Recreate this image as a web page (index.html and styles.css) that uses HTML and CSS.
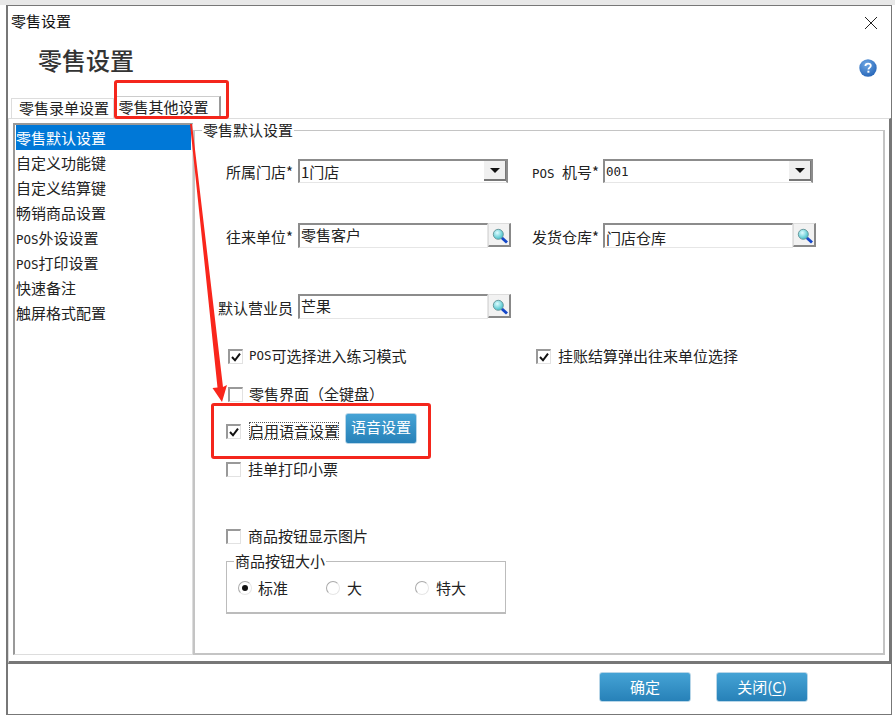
FILE: index.html
```html
<!DOCTYPE html>
<html lang="zh-CN">
<head>
<meta charset="utf-8">
<title>零售设置</title>
<link rel="stylesheet" href="styles.css">
</head>
<body>
<div class="dialog">
  <div class="titlebar">
    <span>零售设置</span>
    <svg class="close" width="14" height="14" viewBox="0 0 14 14"><path d="M1 1L13 13M13 1L1 13" stroke="#222" stroke-width="1" fill="none"/></svg>
  </div>
  <div class="heading">
    <h1>零售设置</h1>
    <svg class="help" width="18" height="18" viewBox="0 0 18 18">
      <defs><radialGradient id="hg" cx="0.4" cy="0.3" r="0.8"><stop offset="0" stop-color="#6fa8e4"/><stop offset="1" stop-color="#1f5fb4"/></radialGradient></defs>
      <circle cx="9" cy="9" r="8.7" fill="url(#hg)"/>
      <path d="M6.400 7C6.500 5.400 7.600 4.600 9.100 4.600C10.700 4.600 11.800 5.500 11.800 6.800C11.800 8.600 9.400 8.600 9.400 10.600" fill="none" stroke="#fff" stroke-width="1.800"/>
      <rect x="8.400" y="11.700" width="2" height="2" fill="#fff"/>
    </svg>
  </div>
  <div class="tabs">
    <div class="tab">零售录单设置</div>
    <div class="tab active">零售其他设置</div>
  </div>
  <div class="panel">
    <ul class="list">
      <li class="selected">零售默认设置</li>
      <li>自定义功能键</li>
      <li>自定义结算键</li>
      <li>畅销商品设置</li>
      <li><span class="lat">POS</span>外设设置</li>
      <li><span class="lat">POS</span>打印设置</li>
      <li>快速备注</li>
      <li>触屏格式配置</li>
    </ul>
    <fieldset class="group">
      <legend>零售默认设置</legend>
      <div class="fields">
        <div class="field"><label class="flabel">所属门店*</label><div class="combo"><span>1门店</span><span class="drop"><i></i></span></div></div>
        <div class="field right"><label class="flabel"><span class="lat">POS </span>机号*</label><div class="combo"><span class="lat">001</span><span class="drop"><i></i></span></div></div>
      </div>
      <div class="fields second">
        <div class="field tall"><label class="flabel">往来单位*</label><div class="lookup"><span>零售客户</span></div>
          <button class="find"><svg width="18" height="18" viewBox="0 0 18 18"><use href="#lens"/></svg></button></div>
        <div class="field tall right"><label class="flabel">发货仓库*</label><div class="lookup lower"><span>门店仓库</span></div>
          <button class="find"><svg width="18" height="18" viewBox="0 0 18 18"><use href="#lens"/></svg></button></div>
      </div>
      <div class="fields third">
        <div class="field tall"><label class="flabel">默认营业员</label><div class="lookup"><span>芒果</span></div>
          <button class="find"><svg width="18" height="18" viewBox="0 0 18 18"><use href="#lens"/></svg></button></div>
      </div>
      <div class="checks first-check">
        <div class="check on-a"><span class="box"><svg width="12" height="12" viewBox="0 0 12 12"><path d="M2 6L5 9.300L10 2.600" fill="none" stroke="#111" stroke-width="2"/></svg></span><span class="lat">POS</span>可选择进入练习模式</div>
        <div class="check on-b"><span class="box"><svg width="12" height="12" viewBox="0 0 12 12"><path d="M2 6L5 9.300L10 2.600" fill="none" stroke="#111" stroke-width="2"/></svg></span>挂账结算弹出往来单位选择</div>
      </div>
      <div class="check line-keyboard"><span class="box"></span>零售界面（全键盘）</div>
      <div class="check line-voice"><span class="box"><svg width="12" height="12" viewBox="0 0 12 12"><path d="M2 6L5 9.300L10 2.600" fill="none" stroke="#111" stroke-width="2"/></svg></span><span class="focus">启用语音设置</span><button class="blue voice">语音设置</button></div>
      <div class="check line-hang"><span class="box"></span>挂单打印小票</div>
      <div class="check line-image"><span class="box"></span>商品按钮显示图片</div>
      <fieldset class="sizes">
        <legend>商品按钮大小</legend>
        <div class="radios">
          <span class="radio r1"><i class="dot on"></i>标准</span>
          <span class="radio r2"><i class="dot"></i>大</span>
          <span class="radio r3"><i class="dot"></i>特大</span>
        </div>
      </fieldset>
    </fieldset>
  </div>
  <div class="footer">
    <button class="blue action">确定</button>
    <button class="blue action">关闭(<u>C</u>)</button>
  </div>
</div>

<svg class="defs" width="0" height="0">
  <defs>
    <radialGradient id="lg" cx="0.4" cy="0.35" r="0.7"><stop offset="0" stop-color="#dffcff"/><stop offset="1" stop-color="#37bcc6"/></radialGradient>
    <g id="lens">
      <path d="M10.500 10.500L16 15.500" stroke="#1447c8" stroke-width="3" fill="none"/>
      <circle cx="7.300" cy="7.300" r="5" fill="url(#lg)" stroke="#6c9a9e" stroke-width="1"/>
    </g>
  </defs>
</svg>

<div class="mark mark-tab"></div>
<div class="mark mark-voice"></div>
<svg class="arrow" width="895" height="717" viewBox="0 0 895 717">
  <path d="M190 124L192 124L223 387L227 385L222 402L212.500 388L217.500 387.500Z" fill="#f9261c"/>
</svg>
</body>
</html>
```
FILE: styles.css
```css
* { box-sizing: border-box; }
html, body { margin: 0; padding: 0; }
body {
  width: 895px;
  height: 717px;
  overflow: hidden;
  background: #fff;
  border-top: 5px solid #e8e8e8;
  padding: 0 3px 2px 6px;
  position: relative;
  font-family: "Noto Sans CJK SC", "Liberation Sans", sans-serif;
  font-size: 15px;
  line-height: 20px;
  color: #222;
}
.lat { font-family: "DejaVu Sans Mono", monospace; font-size: 12.5px; }
.dialog {
  height: 710px;
  border: 1px solid #777;
  border-left-width: 2px;
  background: #fff;
  display: flex;
  flex-direction: column;
}
.titlebar {
  height: 34px;
  flex: none;
  display: flex;
  align-items: center;
  justify-content: space-between;
  padding: 0 13px 4px 3px;
  color: #111;
}
.close { display: block; margin-top: 4px; }
.heading {
  height: 40px;
  flex: none;
  display: flex;
  align-items: center;
  justify-content: space-between;
  padding: 0 14px 0 30px;
}
.heading h1 {
  margin: 0;
  font-size: 24px;
  line-height: 30px;
  font-weight: 500;
  color: #333;
}
.help { margin-top: 16px; }
.tabs {
  height: 38px;
  flex: none;
  display: flex;
  align-items: flex-end;
  padding-left: 3px;
}
.tab {
  height: 20px;
  width: 103px;
  border: 1px solid #ddd;
  border-bottom: 0;
  padding-left: 3px;
  text-align: center;
  line-height: 17px;
  white-space: nowrap;
  color: #222;
}
.tab.active {
  height: 22px;
  width: 106px;
  margin-left: 1px;
  padding: 0 8px 0 0;
  border-color: #ccc;
  border-right: 2px solid #999;
  line-height: 19px;
}
.panel {
  height: 546px;
  flex: none;
  border: 1px solid #ddd;
  border-right: 2px solid #777;
  border-bottom: 3px solid #777;
  padding: 4px 4px 6px 4px;
  display: flex;
}
.list {
  list-style: none;
  margin: 0;
  padding: 0 1px;
  width: 180px;
  flex: none;
  border: 2px solid #999;
  border-right: 1px solid #ddd;
  border-bottom: 1px solid #ddd;
}
.list li {
  height: 25px;
  line-height: 25px;
  padding-left: 0;
  white-space: nowrap;
}
.list li.selected { background: #0078d7; color: #fff; }
.group {
  flex: 1;
  min-width: 0;
  margin: 0;
  padding: 0;
  border: 2px solid #c4c4c4;
  border-top-width: 1px;
  position: relative;
}
.group > legend {
  margin-left: 7px;
  padding: 0 1px;
  line-height: 14px;
  height: 14px;
}
.fields { display: flex; margin-top: 22px; }
.fields.second { margin-top: 40px; }
.fields.third { margin-top: 46px; }
.field { display: flex; align-items: stretch; height: 24px; width: 337px; }
.field.tall { height: 25px; }
.field.right { width: auto; }
.flabel {
  width: 103px;
  flex: none;
  text-align: right;
  padding-right: 5px;
  line-height: 26px;
  white-space: nowrap;
}
.field.tall .flabel { line-height: 28px; }
.field.right .flabel { width: 71px; padding-right: 0; text-align: left; }
.combo, .lookup {
  border: 2px solid #8c8c8c;
  border-right: 1px solid #e6e6e6;
  border-bottom: 1px solid #e6e6e6;
  display: flex;
  justify-content: space-between;
  padding-left: 1px;
  line-height: 22px;
  white-space: nowrap;
  background: #fff;
}
.combo { height: 24px; width: 210px; border-right: 2px solid #8c8c8c; }
.lookup { height: 25px; width: 190px; line-height: 19px; }
.lookup.lower { line-height: 25px; }
.drop {
  width: 22px;
  height: 20px;
  background: #f0f0f0;
  border-right: 1px solid #777;
  border-bottom: 2px solid #777;
  display: flex;
  align-items: center;
  justify-content: center;
}
.drop i {
  width: 0;
  height: 0;
  border: 5px solid transparent;
  border-top: 5px solid #111;
  border-bottom: 0;
}
.find {
  width: 23px;
  height: 24px;
  margin: 0;
  padding: 2px 0 0 1px;
  background: #f2f2f2;
  border: 1px solid #ddd;
  border-right: 2px solid #888;
  border-bottom: 2px solid #888;
  display: flex;
  align-items: center;
  justify-content: center;
}
.defs { position: absolute; }
.checks { display: flex; margin-top: 27px; }
.check {
  display: flex;
  align-items: center;
  height: 20px;
  white-space: nowrap;
  color: #222;
}
.box {
  width: 15px;
  height: 15px;
  flex: none;
  border: 2px solid #999;
  border-right: 1px solid #e2e2e2;
  border-bottom: 1px solid #e2e2e2;
  margin-right: 6px;
  background: #fff;
  display: flex;
  align-items: center;
  justify-content: center;
}
.on-a { margin-left: 33px; width: 308px; }
.on-b .box { margin-right: 7px; }
.line-keyboard { margin: 18px 0 0 33px; }
.line-voice { margin: 17px 0 0 31px; }
.line-voice .box { margin-right: 8px; }
.line-hang { margin: 18px 0 0 31px; }
.line-image { margin: 47px 0 0 31px; }
.line-hang .box, .line-image .box { margin-right: 7px; }
.focus { outline: 1px dotted #555; outline-offset: -1px; height: 18px; line-height: 18px; }
.blue {
  color: #fff;
  font: inherit;
  border: 1px solid #b8d6e8;
  border-radius: 3px;
  background: linear-gradient(#45a3d5, #2781b8);
  padding: 0;
}
.voice { width: 72px; height: 31px; margin: -6px 0 0 6px; font-size: 15px; line-height: 25px; padding-bottom: 4px; }
.sizes {
  width: 280px;
  height: 60px;
  margin: 8px 0 0 31px;
  padding: 0;
  border: 2px solid #bcbcbc;
  border-top-width: 1px;
  border-left-width: 1px;
  border-right-width: 1px;
}
.sizes > legend {
  margin-left: 7px;
  padding: 0 1px;
  height: 14px;
  line-height: 14px;
}
.radios { display: flex; margin-top: 10px; padding-left: 11px; }
.radio { display: flex; align-items: center; height: 20px; white-space: nowrap; }
.r1 { width: 88px; }
.r2 { width: 89px; }
.dot {
  width: 14px;
  height: 14px;
  border-radius: 50%;
  border: 1px solid #aaa;
  border-right-color: #e6e6e6;
  border-bottom-color: #e6e6e6;
  margin-right: 7px;
  display: flex;
  align-items: center;
  justify-content: center;
  flex: none;
}
.dot.on { margin-right: 6px; }
.dot.on::after {
  content: "";
  width: 6px;
  height: 6px;
  border-radius: 50%;
  background: #111;
}
.footer {
  flex: 1;
  display: flex;
  justify-content: flex-end;
  align-items: flex-start;
  gap: 25px;
  padding: 8px 83px 0 0;
}
.action { width: 92px; height: 30px; font-size: 15px; }
.action u { text-underline-offset: 2px; }
.mark {
  position: absolute;
  border: 3px solid #f4261c;
  border-radius: 3px;
  pointer-events: none;
}
.mark-tab { left: 114px; top: 75px; width: 115px; height: 39px; }
.mark-voice { left: 211px; top: 398px; width: 220px; height: 56px; }
.arrow { position: absolute; left: 0; top: -5px; pointer-events: none; }
```
